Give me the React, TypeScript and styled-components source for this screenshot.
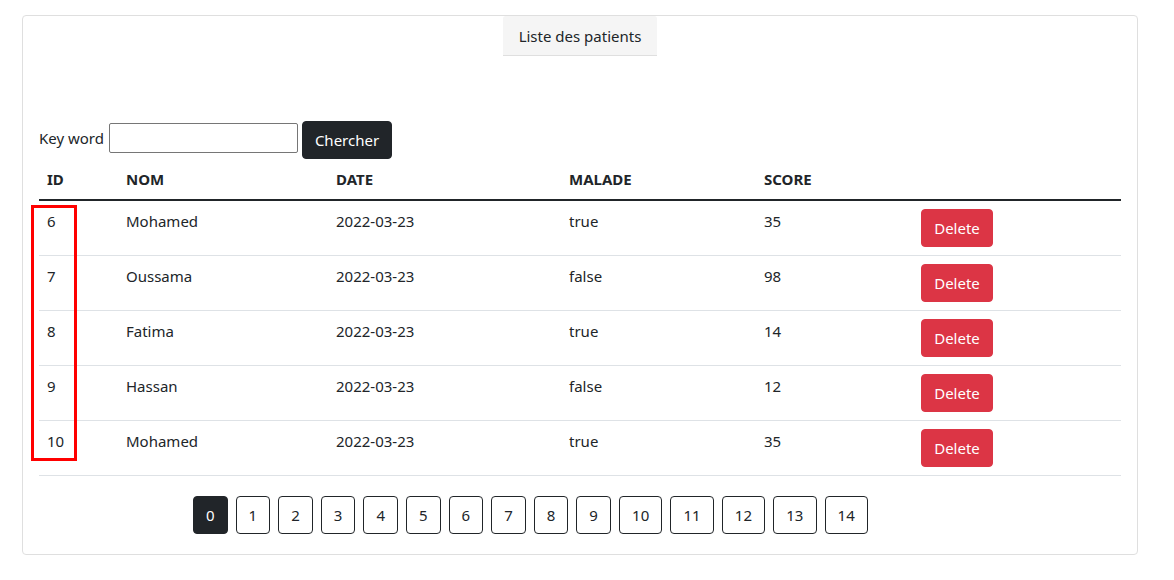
import React from "react";
import styled, { createGlobalStyle } from "styled-components";

const Global = createGlobalStyle`
  html, body { margin: 0; padding: 0; background: #fff; }
  body {
    font-family: "Noto Sans", "Open Sans", sans-serif;
    font-size: 15px;
    line-height: 24px;
    color: #212529;
  }
  * { box-sizing: border-box; }
`;

const Card = styled.div`
  position: relative;
  margin: 15px 0 0 22px;
  width: 1116px;
  border: 1px solid #dfdfdf;
  border-radius: 4px;
  display: flex;
  flex-direction: column;
`;

const HeaderTab = styled.div`
  align-self: center;
  width: 154px;
  text-align: center;
  padding: 8px 0 7px;
  background: #f5f5f5;
  border-bottom: 1px solid #dfdfdf;
  border-radius: 3px 3px 0 0;
  color: #212529;
`;

const Body = styled.div`
  padding: 0 16px 20px 16px;
`;

const SearchForm = styled.form`
  display: flex;
  align-items: flex-start;
  gap: 4px;
  margin-top: 65px;
  height: 38px;
`;

const Label = styled.label`
  color: #212529;
  padding-top: 5px;
  width: 66px;
`;

const Input = styled.input`
  width: 189px;
  height: 30px;
  margin-top: 2px;
  border: 1px solid #767676;
  border-radius: 2px;
  padding: 1px 2px;
  font-size: 13px;
`;

const DarkButton = styled.button`
  background: #212529;
  color: #fff;
  border: 1px solid #212529;
  border-radius: 4px;
  height: 38px;
  width: 90px;
  padding: 6px 0;
  font-family: inherit;
  font-size: 15px;
  line-height: 24px;
`;

const Table = styled.table`
  width: 100%;
  border-collapse: collapse;
  table-layout: fixed;
`;

const Th = styled.th<{ $w?: number }>`
  width: ${(p) => (p.$w ? `${p.$w}px` : "auto")};
  text-align: left;
  font-weight: 700;
  padding: 8px;
  line-height: 24px;
  border-bottom: 2px solid #212529;
`;

const Td = styled.td`
  padding: 8px;
  line-height: 24px;
  vertical-align: top;
  border-bottom: 1px solid #dee2e6;
  height: 55px;
`;

const DangerButton = styled.button`
  background: #dc3545;
  color: #fff;
  border: 1px solid #dc3545;
  border-radius: 4px;
  height: 38px;
  width: 72px;
  padding: 6px 0;
  font-family: inherit;
  font-size: 15px;
  line-height: 24px;
`;

const Pagination = styled.ul`
  list-style: none;
  display: flex;
  gap: 8px;
  margin: 20px 0 0 0;
  padding: 0 0 0 154px;
`;

const PageButton = styled.button<{ $active?: boolean; $wide?: boolean }>`
  display: block;
  height: 38px;
  width: ${(p) => (p.$wide ? "43.4px" : "34.6px")};
  padding: 6px 0;
  border-radius: 4px;
  border: 1px solid #212529;
  background: ${(p) => (p.$active ? "#212529" : "#fff")};
  color: ${(p) => (p.$active ? "#fff" : "#212529")};
  font-family: inherit;
  font-size: 15px;
  line-height: 24px;
`;

const Highlight = styled.div`
  position: absolute;
  left: 8px;
  top: 189px;
  width: 46px;
  height: 256px;
  border: 3px solid #ff0000;
  pointer-events: none;
`;

const patients = [
  { id: 6, nom: "Mohamed", date: "2022-03-23", malade: "true", score: 35 },
  { id: 7, nom: "Oussama", date: "2022-03-23", malade: "false", score: 98 },
  { id: 8, nom: "Fatima", date: "2022-03-23", malade: "true", score: 14 },
  { id: 9, nom: "Hassan", date: "2022-03-23", malade: "false", score: 12 },
  { id: 10, nom: "Mohamed", date: "2022-03-23", malade: "true", score: 35 },
];

export default function App() {
  return (
    <>
      <Global />
      <Card>
        <HeaderTab>Liste des patients</HeaderTab>
        <Body>
          <SearchForm onSubmit={(e) => e.preventDefault()}>
            <Label>Key word</Label>
            <Input type="text" />
            <DarkButton type="submit">Chercher</DarkButton>
          </SearchForm>
          <Table>
            <thead>
              <tr>
                <Th $w={79}>ID</Th>
                <Th $w={210}>NOM</Th>
                <Th $w={233}>DATE</Th>
                <Th $w={195}>MALADE</Th>
                <Th $w={157}>SCORE</Th>
                <Th></Th>
              </tr>
            </thead>
            <tbody>
              {patients.map((p) => (
                <tr key={p.id}>
                  <Td>{p.id}</Td>
                  <Td>{p.nom}</Td>
                  <Td>{p.date}</Td>
                  <Td>{p.malade}</Td>
                  <Td>{p.score}</Td>
                  <Td>
                    <DangerButton>Delete</DangerButton>
                  </Td>
                </tr>
              ))}
            </tbody>
          </Table>
          <Pagination>
            {Array.from({ length: 15 }, (_, i) => (
              <li key={i}>
                <PageButton $active={i === 0} $wide={i >= 10}>
                  {i}
                </PageButton>
              </li>
            ))}
          </Pagination>
        </Body>
        <Highlight />
      </Card>
    </>
  );
}
